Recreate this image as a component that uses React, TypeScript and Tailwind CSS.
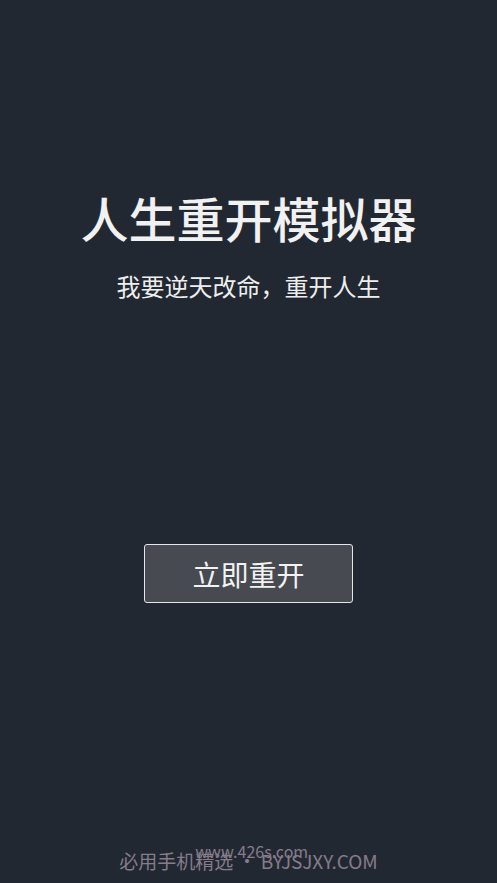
const cjk = { fontFamily: '"Noto Sans CJK SC", "Noto Sans", sans-serif' };

export default function App() {
  return (
    <div
      className="w-[497px] h-[883px] bg-[#222831] flex flex-col items-center overflow-hidden"
      style={cjk}
    >
      <h1 className="mt-[190px] text-[48px] leading-[54px] font-medium text-[#f1f1f1]">
        人生重开模拟器
      </h1>
      <p className="mt-[26px] text-[24px] leading-[32px] text-[#eeeeee]">
        我要逆天改命，重开人生
      </p>

      <button className="mt-[242px] w-[209px] h-[59px] rounded-[3px] border-[1.5px] border-[#e6e6e6] bg-[#474a51] text-[28px] text-[#f2f2f2] flex items-center justify-center">
        立即重开
      </button>

      {/* footer watermark, the url sits on top of the brand line */}
      <div className="mt-auto mb-[8px] relative flex items-center justify-center">
        <span className="text-[19px] leading-[28px] text-[#857c8c] whitespace-nowrap">
          必用手机精选 • BYJSJXY.COM
        </span>
        <span className="absolute left-[76px] top-[-6px] text-[16px] leading-[20px] text-[#857c8c] whitespace-nowrap">
          www.426s.com
        </span>
      </div>
    </div>
  );
}
